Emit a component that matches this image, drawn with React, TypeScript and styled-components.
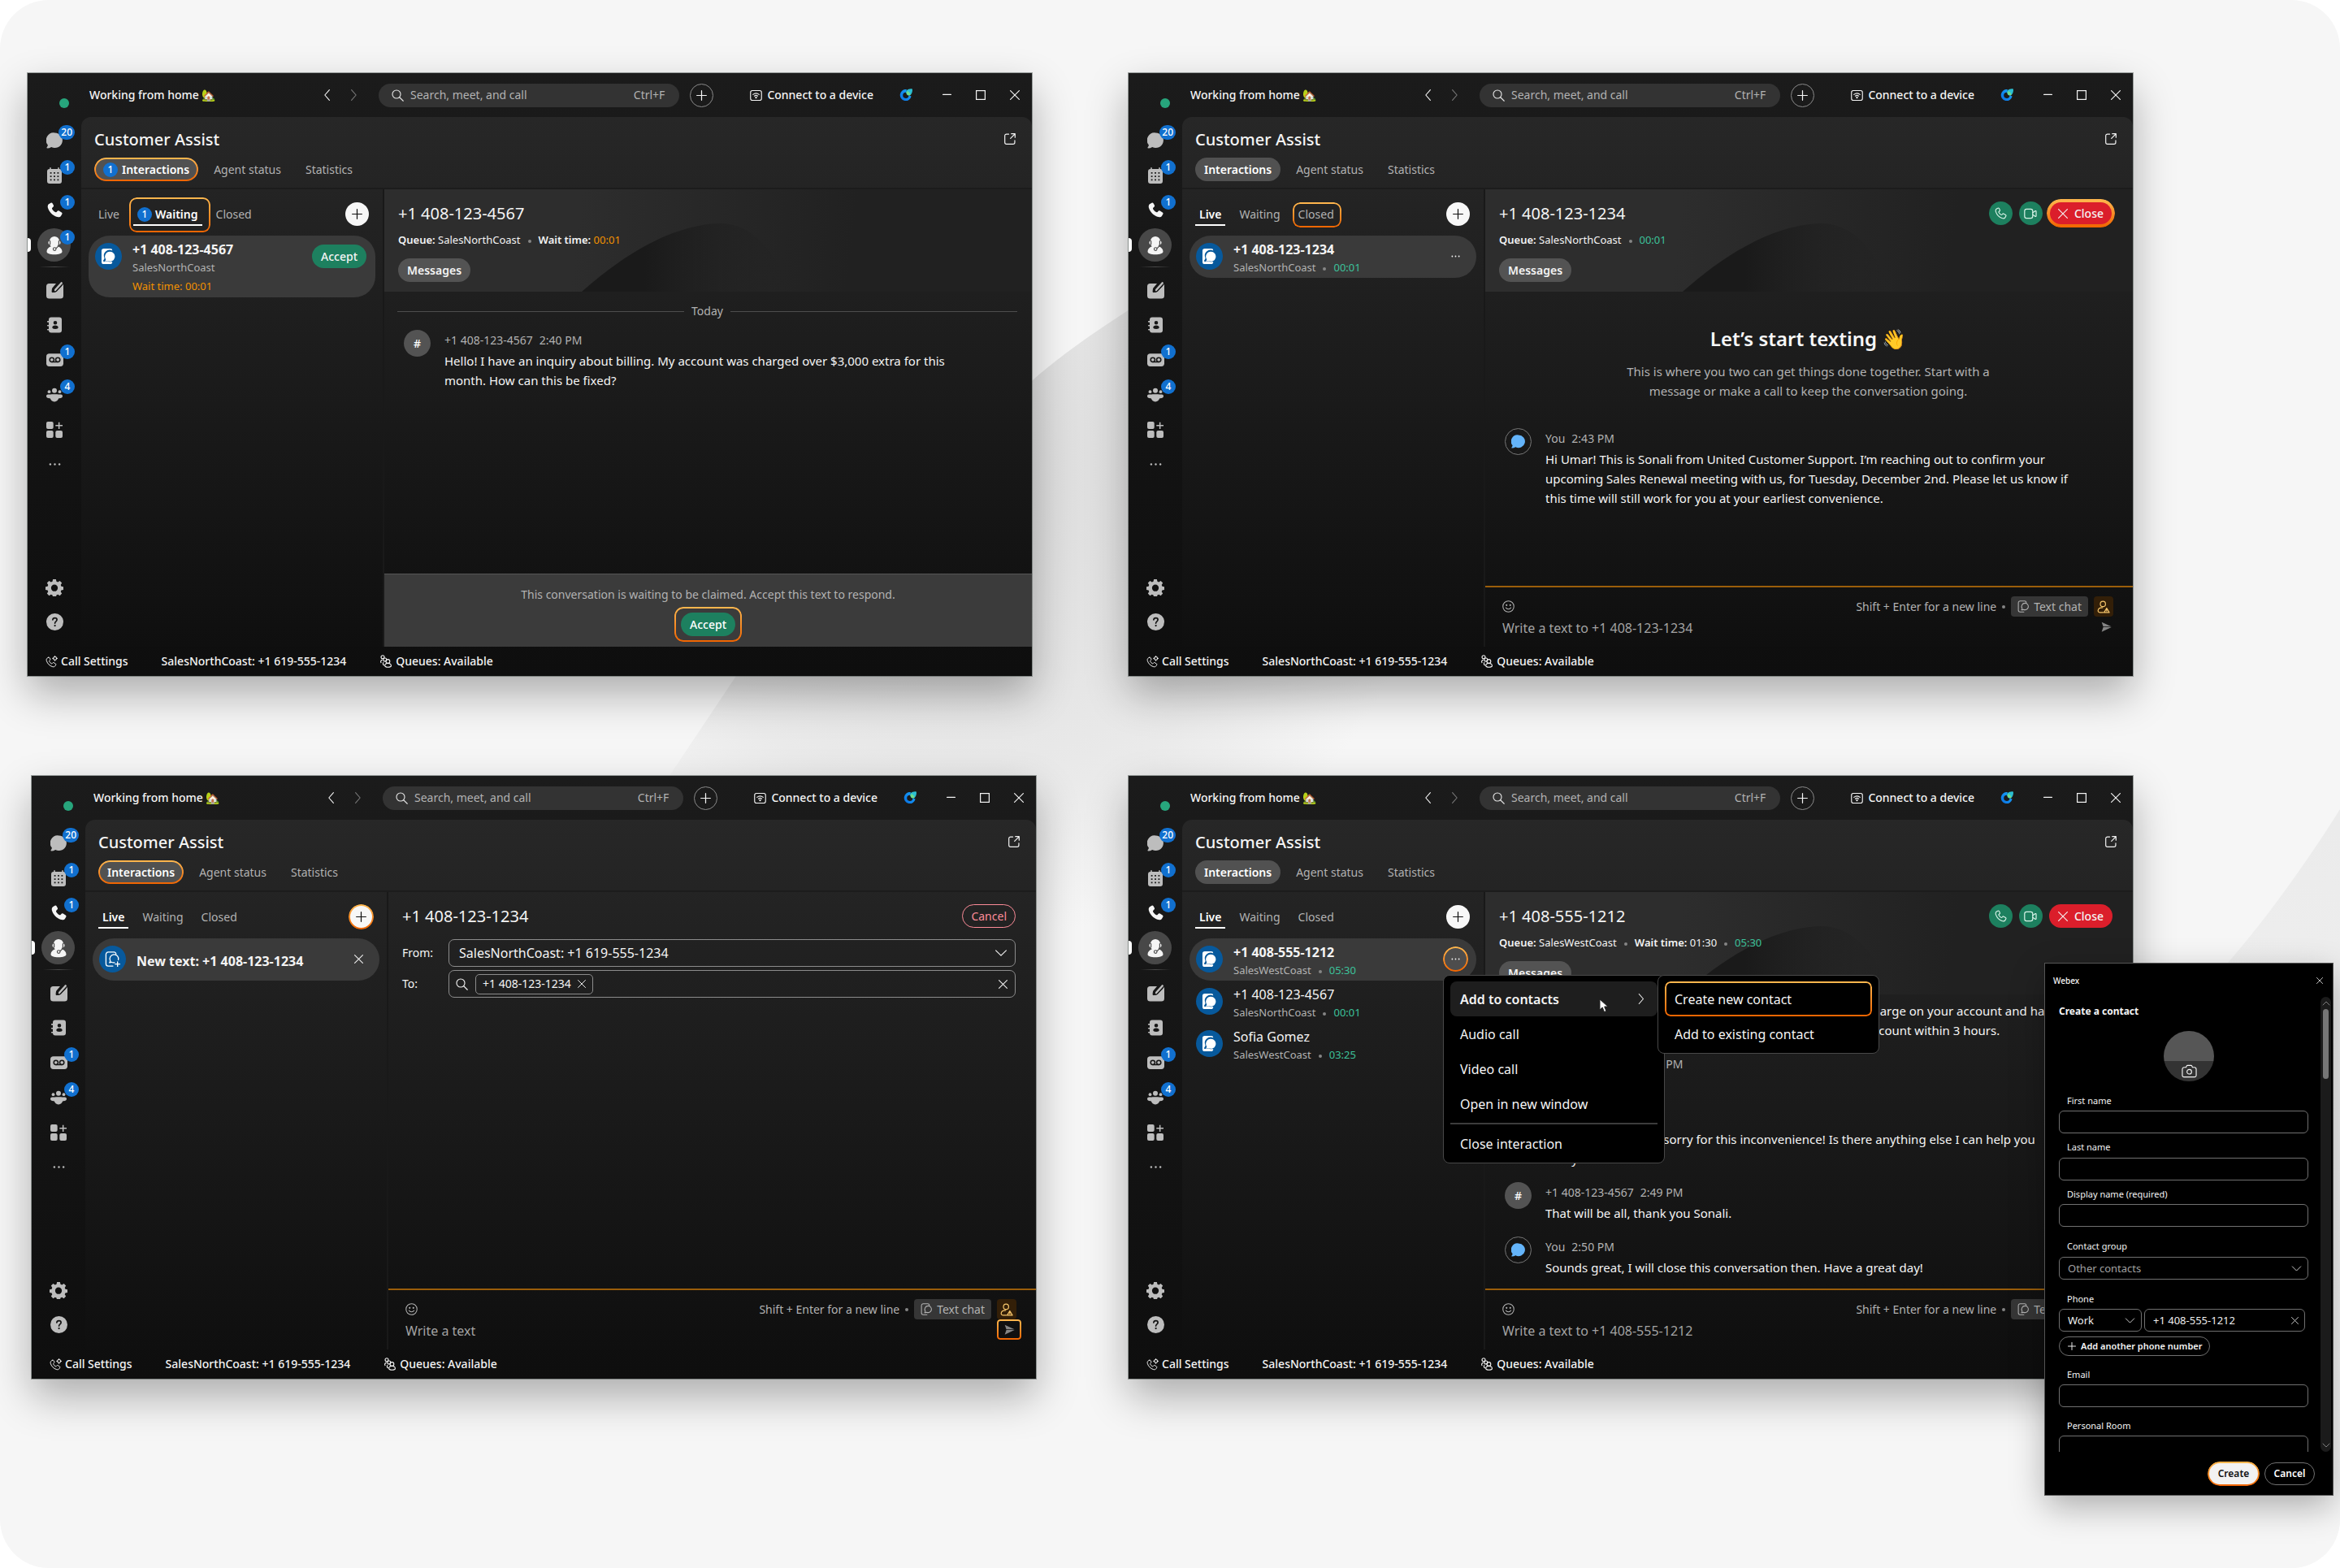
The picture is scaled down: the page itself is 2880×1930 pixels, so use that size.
import React from "react";
import styled, { createGlobalStyle, css } from "styled-components";

const font = `"Noto Sans", "Open Sans", "Noto Color Emoji", sans-serif`;
const green = "#1d805f";
const mint = "#3cc29a";
const amber = "#f29100";
const muted = "#b2b2b2";
const blue = "#1170cf";

const GlobalStyle = createGlobalStyle`
  * { box-sizing: border-box; }
  body { margin: 0; background: #fff; font-family: ${font}; }
  h1, h2, h3, p, ul { margin: 0; padding: 0; font-weight: inherit; }
  ul { list-style: none; }
  button, input, select { font: inherit; color: inherit; margin: 0; padding: 0; border: 0; background: none; outline: none; }
  svg { display: block; flex: none; }
`;

const ring = (inset: string, radius: number, width: number) => css`
  position: relative;
  &::after {
    content: "";
    position: absolute;
    inset: ${inset};
    border-radius: ${radius}px;
    padding: ${width}px;
    background: linear-gradient(#ffb84f, #f06400);
    mask: linear-gradient(#000 0 0) content-box exclude, linear-gradient(#000 0 0) border-box;
    pointer-events: none;
  }
`;

/* ---------- page ---------- */

const Page = styled.main`
  position: relative;
  isolation: isolate;
  min-height: 100vh;
  padding: 90px 255px 60px 0;
  background: #f6f6f6;
  border-radius: 60px;
  overflow: hidden;
  color: #f4f4f4;
  font-size: 14px;
  line-height: 22px;
`;

const Backdrop = styled.svg`
  position: absolute;
  inset: 0;
  width: 100%;
  height: 100%;
  z-index: -1;
`;

const WindowRow = styled.div<{ $start: number }>`
  display: grid;
  grid-template-columns: 1fr 1fr;
  gap: ${(p) => 153 - p.$start}px;
  padding-left: ${(p) => p.$start}px;
  & + & { margin-top: 123px; }
`;

/* ---------- window shell ---------- */

const Frame = styled.section`
  position: relative;
  display: grid;
  grid-template: minmax(706px, auto) 36px / 66px 1fr;
  background: linear-gradient(#1b1b1b, #0e0e0e);
  box-shadow: 0 0 0 1px rgba(70, 80, 75, 0.5), 0 22px 48px rgba(0, 0, 0, 0.3);
`;

const Rail = styled.nav`
  position: relative;
  display: flex;
  flex-direction: column;
  padding-bottom: 9px;
  color: #bdbdbd;
`;

const StatusSlot = styled.div`
  height: 61px;
  padding: 31px 0 0 39px;
  &::before {
    content: "";
    display: block;
    width: 12px;
    height: 12px;
    border-radius: 50%;
    background: #27a57c;
  }
`;

const RailButton = styled.button<{ $active?: boolean; $bright?: boolean }>`
  position: relative;
  display: grid;
  place-items: center;
  height: 43px;
  width: 66px;
  color: ${(p) => (p.$active || p.$bright ? "#f5f5f5" : "#bdbdbd")};
  svg { position: relative; }
  ${(p) =>
    p.$active &&
    css`
      &::before {
        content: "";
        position: absolute;
        left: 12px;
        top: 1px;
        width: 41px;
        height: 41px;
        border-radius: 50%;
        background: #484848;
      }
      &::after {
        content: "";
        position: absolute;
        left: 0;
        top: 13px;
        width: 4px;
        height: 17px;
        border-radius: 0 4px 4px 0;
        background: #fff;
      }
    `}
`;

const Count = styled.span`
  min-width: 18px;
  height: 18px;
  padding: 0 3px;
  border-radius: 9px;
  background: ${blue};
  color: #fff;
  font-size: 12px;
  font-weight: 500;
  line-height: 18px;
  text-align: center;
`;

const RailCount = styled(Count)`
  position: absolute;
  top: 3px;
  right: 8px;
`;

const RailDivider = styled.hr`
  width: 38px;
  height: 1px;
  margin: 5px 0 6px 14px;
  border: 0;
  background: linear-gradient(90deg, transparent, #4a4a4a, transparent);
`;

const RailSpacer = styled.div`
  flex: 1;
`;

const Main = styled.div`
  display: grid;
  grid-template-rows: 54px 1fr;
  min-width: 0;
`;

const TitleBar = styled.header`
  display: flex;
  align-items: center;
  padding: 0 15px 0 10px;
`;

const StatusText = styled.p`
  width: 285px;
  font-weight: 500;
`;

const ChevronPair = styled.div`
  display: flex;
  align-items: center;
  gap: 16px;
  width: 71px;
  button + button { color: #777; }
`;

const SearchBox = styled.label`
  flex: 1;
  display: flex;
  align-items: center;
  gap: 8px;
  height: 29px;
  padding: 0 18px 0 16px;
  border-radius: 15px;
  background: #333;
  color: ${muted};
  input { flex: 1; min-width: 0; }
  input::placeholder { color: ${muted}; opacity: 1; }
  svg { color: #e6e6e6; }
`;

const RoundButton = styled.button<{ $tone: "outline" | "white" | "green" | "grey"; $ring?: boolean }>`
  flex: none;
  display: grid;
  place-items: center;
  width: 29px;
  height: 29px;
  border-radius: 50%;
  ${(p) => p.$tone === "outline" && css`border: 1px solid #8a8a8a; margin-left: 13px;`}
  ${(p) => p.$tone === "white" && css`background: #f7f7f7; color: #111;`}
  ${(p) => p.$tone === "green" && css`background: ${green}; color: #d9f3e8;`}
  ${(p) => p.$tone === "grey" && css`background: #4d4d4d;`}
  ${(p) => p.$ring && ring("-1px", 16, 2)}
`;

const ConnectButton = styled.button`
  display: flex;
  align-items: center;
  gap: 6px;
  margin: 0 32px 0 45px;
  font-weight: 500;
  white-space: nowrap;
`;

const CaptionButtons = styled.div`
  display: flex;
  align-items: center;
  gap: 30px;
  margin-left: 37px;
`;

const Panel = styled.div`
  display: grid;
  grid-template: auto 1fr / 373px 1fr;
  border-radius: 12px 12px 0 0;
  background: linear-gradient(#272727, #0f0f0f);
  overflow: hidden;
`;

const PanelHeader = styled.header`
  grid-column: 1 / -1;
  display: flex;
  justify-content: space-between;
  align-items: flex-start;
  padding: 14px 20px 8px 16px;
  border-bottom: 2px solid #1c1c1c;
  > button { margin-top: 6px; }
`;

const PanelTitle = styled.h1`
  font-size: 20px;
  font-weight: 500;
  line-height: 28px;
`;

const MainTabs = styled.div`
  display: flex;
  gap: 8px;
  margin-top: 8px;
`;

const MainTab = styled.button<{ $on?: boolean; $ring?: boolean }>`
  display: flex;
  align-items: center;
  gap: 5px;
  height: 29px;
  padding: 0 11px;
  border-radius: 15px;
  color: ${(p) => (p.$on ? "#fff" : muted)};
  background: ${(p) => (p.$on ? "#515151" : "transparent")};
  font-weight: ${(p) => (p.$on ? 600 : 400)};
  ${(p) => p.$ring && ring("0", 15, 2)}
`;

/* ---------- interaction list ---------- */

const ListColumn = styled.aside`
  padding: 16px 9px 0 9px;
  border-right: 2px solid #191919;
`;

const ListTabs = styled.div`
  display: flex;
  align-items: flex-start;
  gap: 12px;
  padding: 0 8px 0 7px;
  margin-bottom: 12px;
  > :last-child { margin-left: auto; }
`;

const ListTab = styled.button<{ $on?: boolean; $ring?: string }>`
  display: flex;
  align-items: center;
  gap: 4px;
  height: 29px;
  padding: 3px 5px 0;
  color: ${(p) => (p.$on ? "#fff" : muted)};
  font-weight: ${(p) => (p.$on ? 600 : 400)};
  border-bottom: 2px solid ${(p) => (p.$on ? "#fff" : "transparent")};
  ${(p) => p.$ring && ring(p.$ring, 9, 2)}
`;

const Item = styled.li<{ $on?: boolean }>`
  display: grid;
  grid-template-columns: 33px 1fr auto;
  column-gap: 13px;
  align-items: center;
  min-height: 52px;
  padding: 6px 11px 2px 8px;
  border-radius: 26px;
  background: ${(p) => (p.$on ? "#3a3a3a" : "transparent")};
  > :first-child, > :last-child { align-self: start; }
`;

const QueueAvatar = styled.span`
  display: grid;
  place-items: center;
  width: 33px;
  height: 33px;
  margin-top: 3px;
  border-radius: 50%;
  background: #07599c;
  color: #fff;
`;

const ItemTitle = styled.h3<{ $bold?: boolean }>`
  font-size: 16px;
  font-weight: ${(p) => (p.$bold ? 700 : 400)};
`;

const Meta = styled.p`
  color: ${muted};
  font-size: 13px;
`;

const WaitMeta = styled(Meta)`
  color: ${amber};
  line-height: 24px;
`;

const Dot = styled.i<{ $gap: number }>`
  display: inline-block;
  width: 4px;
  height: 4px;
  margin: 0 ${(p) => p.$gap}px;
  border-radius: 50%;
  background: #858585;
  vertical-align: middle;
`;

const Time = styled.span<{ $tone?: "mint" | "amber" }>`
  color: ${(p) => (p.$tone === "mint" ? mint : p.$tone === "amber" ? amber : "inherit")};
`;

const PillButton = styled.button<{ $tone: "green" | "red" | "pink"; $ring?: [string, number, number] }>`
  display: flex;
  align-items: center;
  justify-content: center;
  gap: 8px;
  height: 29px;
  padding: 0 11px;
  border-radius: 15px;
  font-weight: 500;
  ${(p) => p.$tone === "green" && css`background: ${green};`}
  ${(p) => p.$tone === "red" && css`background: #db1e2b;`}
  ${(p) => p.$tone === "pink" && css`border: 1px solid #fc8b98; color: #fc8b98; font-weight: 400; padding: 0 10px;`}
  ${(p) => p.$ring && ring(...p.$ring)}
`;

const ItemAction = styled.div`
  display: flex;
  align-items: center;
  height: 39px;
`;

const IconButton = styled.button`
  display: grid;
  place-items: center;
  width: 29px;
  height: 29px;
`;

/* ---------- conversation ---------- */

const Conversation = styled.section`
  display: flex;
  flex-direction: column;
  min-width: 0;
`;

const ConvHeader = styled.header<{ $plain?: boolean }>`
  position: relative;
  isolation: isolate;
  padding: 15px 25px 12px 17px;
  background: ${(p) => (p.$plain ? "none" : "linear-gradient(97deg, #2d2d2d 30%, #212121 72%)")};
`;

const HeaderArt = styled.svg`
  position: absolute;
  left: 0;
  bottom: 0;
  z-index: -1;
`;

const ConvTop = styled.div`
  display: flex;
  align-items: center;
  gap: 8px;
  height: 29px;
`;

const ConvTitle = styled.h2`
  flex: 1;
  font-size: 20px;
  line-height: 28px;
`;

const QueueLine = styled.p`
  margin-top: 7px;
  margin-bottom: 12px;
  font-size: 13px;
  b { font-weight: 600; }
`;

const MessagesTab = styled.button`
  height: 29px;
  padding: 0 11px;
  border-radius: 15px;
  background: #535353;
  font-weight: 600;
`;

const Body = styled.div<{ $end?: boolean }>`
  flex: 1 1 0;
  display: flex;
  flex-direction: column;
  justify-content: ${(p) => (p.$end ? "flex-end" : "flex-start")};
  gap: 17px;
  min-height: 0;
  padding: 14px 18px 14px 16px;
  overflow: hidden;
`;

const DayDivider = styled.div`
  display: flex;
  align-items: center;
  gap: 9px;
  color: ${muted};
  line-height: 20px;
  margin-bottom: -4px;
  &::before, &::after { content: ""; flex: 1; height: 1px; background: #4d4d4d; }
`;

const Message = styled.article`
  display: grid;
  grid-template-columns: 33px 1fr;
  column-gap: 17px;
  padding: 0 0 0 8px;
`;

const SenderAvatar = styled.span<{ $self?: boolean }>`
  display: grid;
  place-items: center;
  width: 33px;
  height: 33px;
  border-radius: 50%;
  background: ${(p) => (p.$self ? "none" : "#535353")};
  border: ${(p) => (p.$self ? "1px solid #777" : "0")};
  color: ${(p) => (p.$self ? "#64b4fa" : "#fff")};
  font-weight: 500;
`;

const Sender = styled.p`
  display: flex;
  gap: 8px;
  color: ${muted};
  line-height: 26px;
`;

const MessageText = styled.p`
  font-size: 15px;
  line-height: 24px;
`;

const Intro = styled.div`
  padding: 26px 0 17px;
  text-align: center;
  color: ${muted};
  font-size: 15px;
  line-height: 24px;
  h3 { margin-bottom: 10px; color: #f7f7f7; font-size: 24px; font-weight: 600; line-height: 36px; }
  p { max-width: 500px; margin: 0 auto; }
`;

const ClaimBar = styled.footer`
  display: flex;
  flex-direction: column;
  align-items: center;
  gap: 11px;
  padding: 14px 0 13px;
  border-top: 1px solid #555;
  background: #3b3b3b;
  color: ${muted};
  button { color: #fff; }
`;

const Composer = styled.form`
  padding: 11px 18px 7px 21px;
  border-top: 2px solid #9a5d0a;
  color: ${muted};
`;

const ComposerTools = styled.div`
  display: flex;
  align-items: center;
  height: 25px;
  padding-right: 6px;
  > :first-child { margin-right: auto; width: 15px; }
`;

const ModeChip = styled.button`
  display: flex;
  align-items: center;
  gap: 5px;
  height: 25px;
  padding: 0 8px;
  margin-right: 7px;
  border-radius: 4px;
  background: #363636;
`;

const ContactChip = styled.button`
  display: grid;
  place-items: center;
  width: 24px;
  height: 25px;
  border-radius: 4px;
  background: #331f08;
  color: #f7c66b;
`;

const ComposerEntry = styled.div`
  display: flex;
  align-items: flex-start;
  height: 30px;
  input { flex: 1; height: 28px; font-size: 16px; }
  input::placeholder { color: #a3a3a3; opacity: 1; }
`;

const SendButton = styled.button<{ $ring?: boolean }>`
  display: grid;
  place-items: center;
  width: 30px;
  height: 25px;
  color: #858585;
  ${(p) => p.$ring && ring("0", 4, 2)}
`;

const FieldRow = styled.div<{ $gap: number }>`
  display: grid;
  grid-template-columns: 57px 1fr;
  align-items: center;
  margin-top: ${(p) => p.$gap}px;
`;

const FieldBox = styled.div`
  display: flex;
  align-items: center;
  gap: 9px;
  height: 34px;
  padding: 0 9px 0 8px;
  border: 1px solid #8c8c8c;
  border-radius: 7px;
  font-size: 16px;
  select, input { flex: 1; min-width: 0; padding-left: 4px; appearance: none; }
`;

const NumberChip = styled.span`
  display: flex;
  align-items: center;
  gap: 8px;
  height: 25px;
  padding: 0 8px;
  border: 1px solid #8c8c8c;
  border-radius: 5px;
  font-size: 14px;
`;

const FootBar = styled.footer`
  grid-column: 1 / -1;
  display: flex;
  align-items: center;
  gap: 41px;
  padding-left: 22px;
  font-weight: 500;
  button { display: flex; align-items: center; gap: 4px; }
`;

/* ---------- menus ---------- */

const MenuBox = styled.div<{ $x: number }>`
  position: absolute;
  top: 245px;
  left: ${(p) => p.$x}px;
  width: 273px;
  padding: 7px 8px 2px;
  border: 1px solid #484848;
  border-radius: 8px;
  background: #000;
  font-size: 16px;
  hr { height: 2px; margin: 2px 0; border: 0; background: #3c3c3c; }
`;

const MenuItem = styled.button<{ $on?: boolean; $ring?: boolean }>`
  display: flex;
  align-items: center;
  justify-content: space-between;
  width: 100%;
  height: 43px;
  padding: 0 13px 0 12px;
  border-radius: 8px;
  background: ${(p) => (p.$on ? "#1e1e1e" : "transparent")};
  font-weight: ${(p) => (p.$on ? 600 : 400)};
  ${(p) => p.$ring && ring("0", 7, 2)}
`;

const Pointer = styled.svg`
  position: absolute;
  left: 191px;
  top: 28px;
`;

/* ---------- contact dialog ---------- */

const Dialog = styled.section`
  position: absolute;
  top: 231px;
  left: calc(100% - 108px);
  width: 354px;
  height: 654px;
  display: grid;
  grid-template-rows: 41px 1fr 53px;
  background: #000;
  box-shadow: 0 0 0 1px #555, 0 14px 40px rgba(0, 0, 0, 0.3);
  font-size: 11px;
  line-height: 16px;
`;

const DialogBar = styled.header`
  display: flex;
  align-items: center;
  justify-content: space-between;
  padding: 0 12px 0 10px;
  font-size: 10px;
  font-weight: 500;
`;

const DialogScroll = styled.div`
  display: grid;
  grid-template-columns: 1fr 13px;
  min-height: 0;
  padding-right: 2px;
`;

const ContactForm = styled.form`
  display: flex;
  flex-direction: column;
  padding: 9px 15px 0 17px;
  min-height: 0;
  overflow: hidden;
  h2 { font-size: 12px; font-weight: 700; line-height: 18px; }
`;

const PhotoButton = styled.button`
  flex: none;
  display: grid;
  place-items: end center;
  align-self: center;
  width: 62px;
  height: 62px;
  margin: 15px 0 5px 13px;
  padding-bottom: 3px;
  border-radius: 50%;
  background: linear-gradient(#565656 60%, #333 60%);
`;

const Field = styled.div<{ $gap: number; $label: number }>`
  flex: none;
  margin-top: ${(p) => p.$gap}px;
  > label { display: block; padding-left: 10px; margin-bottom: ${(p) => p.$label}px; }
`;

const FieldInput = styled.div<{ $dim?: boolean }>`
  display: flex;
  align-items: center;
  height: 28px;
  padding: 0 7px 0 10px;
  border: 1px solid #707070;
  border-radius: 6px;
  color: ${(p) => (p.$dim ? "#a0a0a0" : "#eee")};
  font-size: 13px;
  input, select { flex: 1; min-width: 0; width: 100%; appearance: none; }
  svg { color: #ddd; }
`;

const PhoneRow = styled.div`
  display: grid;
  grid-template-columns: 102px 1fr;
  gap: 3px;
  padding-right: 4px;
`;

const AddNumber = styled.button`
  flex: none;
  align-self: flex-start;
  display: flex;
  align-items: center;
  gap: 6px;
  height: 24px;
  margin-top: 6px;
  padding: 0 8px 0 10px;
  border: 1px solid #707070;
  border-radius: 12px;
  font-weight: 600;
`;

const ScrollTrack = styled.div`
  display: flex;
  flex-direction: column;
  align-items: center;
  padding: 3px 0;
  border-radius: 7px;
  background: #1b1b1b;
  color: #aaa;
  &::before {
    content: "";
    order: 1;
    width: 7px;
    height: 86px;
    margin: 2px 0 auto;
    border-radius: 4px;
    background: #767676;
  }
  svg:last-child { order: 2; }
`;

const DialogFoot = styled.footer`
  display: flex;
  justify-content: flex-end;
  gap: 7px;
  padding: 13px 22px 0 0;
`;

const DialogButton = styled.button<{ $primary?: boolean }>`
  width: 62px;
  height: 28px;
  border-radius: 14px;
  font-size: 12px;
  font-weight: 600;
  border: 1px solid ${(p) => (p.$primary ? "#f2f2f2" : "#707070")};
  background: ${(p) => (p.$primary ? "#f2f2f2" : "none")};
  color: ${(p) => (p.$primary ? "#111" : "#fff")};
  ${(p) => p.$primary && ring("-2px", 16, 2)}
`;

/* ---------- icons ---------- */

type IconProps = { size?: number; children: React.ReactNode; fill?: boolean; sw?: number; box?: number };
const Icon = ({ size = 20, children, fill, sw = 1.3, box = 20 }: IconProps) => (
  <svg
    width={size}
    height={size}
    viewBox={`0 0 ${box} ${box}`}
    fill={fill ? "currentColor" : "none"}
    stroke={fill ? "none" : "currentColor"}
    strokeWidth={sw}
    strokeLinecap="round"
    strokeLinejoin="round"
    aria-hidden="true"
  >
    {children}
  </svg>
);

const handset =
  "M5.3 1.6 3.2 2.8C1.5 3.8 1.3 6 2.1 8.2c1.5 4.3 5.3 8.200 9.700 9.700 2.200.8 4.400.6 5.400-1.100l1.200-2.100c.4-.7.2-1.500-.5-1.900l-3-1.900c-.6-.4-1.400-.3-1.900.3l-1 1.100c-.4.4-.9.5-1.400.2-1.600-.9-2.900-2.200-3.800-3.800-.3-.5-.2-1 .2-1.400l1.100-1c.6-.5.7-1.300.3-1.900L7.200 2.100c-.4-.7-1.200-.9-1.900-.5z";
const bubble =
  "M10.500 0.500a9.300 9.300 0 1 1-4.300 17.500c-1.600 1-3.300 1.500-5 1.500-.8 0-1-.8-.5-1.300.8-.9 1.200-1.700 1.200-2.600A9.300 9.300 0 0 1 10.500.5z";

const ChatIcon = ({ size = 20 }: { size?: number }) => (<Icon size={size} fill><path d={bubble} /></Icon>);
const CalendarIcon = () => (
  <Icon fill>
    <path fillRule="evenodd" d="M5 0a.8.8 0 0 1 .8.8V2h8.400V.8a.8.8 0 0 1 1.600 0V2h.2a3 3 0 0 1 3 3v12a3 3 0 0 1-3 3H4a3 3 0 0 1-3-3V5a3 3 0 0 1 3-3h.2V.8A.8.8 0 0 1 5 0zM4.700 6v1.800h1.800V6zm4.400 0v1.800h1.800V6zm4.400 0v1.800h1.800V6zM4.700 10.200V12h1.800v-1.800zm4.400 0V12h1.800v-1.800zm4.400 0V12h1.800v-1.800zM4.700 14.400v1.800h1.800v-1.800zm4.400 0v1.800h1.800v-1.800zm4.400 0v1.800h1.800v-1.800z" />
  </Icon>
);
const PhoneSolid = () => (<Icon fill size={21}><path d={handset} /></Icon>);
const PhoneLine = () => (<Icon size={15} sw={1.5}><path d={handset} /></Icon>);
const AgentIcon = () => (
  <Icon size={24} box={24} fill>
    <path d="M12 1a6 6 0 0 1 6 5.500c1 .3 1.500 1.200 1.500 2.200s-.6 2-1.700 2.200c-.4 1-.9 1.800-1.600 2.400 3 1.200 5.300 3.600 5.300 6.200 0 2.500-3.800 3.800-9.500 3.800s-9.500-1.300-9.500-3.800c0-2.600 2.300-5 5.300-6.200-.7-.6-1.200-1.400-1.600-2.400-1.100-.2-1.700-1.200-1.700-2.200s.5-1.900 1.500-2.200A6 6 0 0 1 12 1z" />
    <path d="M6.600 6.500v4.200M17.400 6.500v4.200M17.200 11c-.6 3-2.600 4.500-4.400 5.200" fill="none" stroke="#484848" strokeWidth="1.200" strokeLinecap="round" />
    <circle cx="12.200" cy="16.600" r="1.800" stroke="#484848" strokeWidth="1.100" />
  </Icon>
);
const NoteIcon = () => (
  <Icon size={22} box={22} fill>
    <path d="M4.500 3H13L8.600 8.200c-.4.5-.6 1.100-.7 1.700l-.3 2.500c-.1 1 .7 1.900 1.700 1.700l2.400-.4c.6-.1 1.200-.4 1.600-.9L19 7.200l3-3.500V18a3.500 3.500 0 0 1-3.500 3.500h-14A3.500 3.500 0 0 1 1 18V6.500A3.500 3.500 0 0 1 4.500 3z" />
    <path d="M18.200 1.200a1.900 1.900 0 0 1 2.900 2.500l-7.700 8.600-3.300 1.100.4-3.600z" stroke="#161616" strokeWidth="1.300" />
  </Icon>
);
const ContactsIcon = () => (
  <Icon fill size={20}>
    <path fillRule="evenodd" d="M6 .5h10a3 3 0 0 1 3 3v13a3 3 0 0 1-3 3H6a3 3 0 0 1-3-3H1.700a.8.800 0 0 1 0-1.600H3v-3.300H1.700a.8.800 0 0 1 0-1.600H3V6.700H1.700a.8.800 0 0 1 0-1.600H3V3.500a3 3 0 0 1 3-3zM11 5a2.300 2.300 0 1 0 0 4.600A2.300 2.300 0 0 0 11 5zm0 5.500c-2.200 0-3.700 1.100-3.700 2.500 0 1.300 1.500 1.900 3.700 1.900s3.700-.6 3.700-1.900c0-1.400-1.500-2.500-3.700-2.500z" />
  </Icon>
);
const VoicemailIcon = () => (
  <Icon size={21} fill>
    <rect x="0" y="3" width="20" height="15" rx="3.500" />
    <g fill="none" stroke="#161616" strokeWidth="1.500"><circle cx="6.500" cy="10.300" r="2.500" /><circle cx="13.500" cy="10.300" r="2.500" /><path d="M6.500 12.800h7" /></g>
  </Icon>
);
const PeopleIcon = () => (
  <Icon size={20} fill>
    <circle cx="10" cy="4.800" r="3" /><circle cx="3.500" cy="6.200" r="1.900" /><circle cx="16.500" cy="6.200" r="1.900" />
    <path d="M2 9.500h3c.5 0 .6.500.5 1-.3 1-.2 2.300.2 3.400-.6.300-1.200.4-1.900.4C1.400 14.300 0 13.300 0 11.600 0 10.300.9 9.500 2 9.500zM15 9.500h3c1.100 0 2 .8 2 2.100 0 1.700-1.400 2.700-3.800 2.700-.7 0-1.300-.1-1.900-.4.4-1.100.5-2.400.2-3.400-.1-.5 0-1 .5-1z" />
    <path d="M6.500 9.300h7c1.300 0 2.200 1 2.200 2.300 0 3.900-2.200 6.800-5.700 6.800s-5.700-2.900-5.700-6.800c0-1.300.9-2.300 2.200-2.300z" />
  </Icon>
);
const AppsIcon = () => (
  <Icon size={20} fill>
    <rect x="0" y="0" width="8.700" height="9" rx="2" /><rect x="0" y="11" width="8.700" height="9" rx="2" /><rect x="11.300" y="11" width="8.700" height="9" rx="2" />
    <path d="M14.900.8h1.500v3.300H20v1.500h-3.600V9h-1.500V5.600h-3.600V4.100h3.600z" />
  </Icon>
);
const Dots = ({ size = 15 }: { size?: number }) => (
  <Icon size={size} fill><circle cx="2.500" cy="10" r="1.600" /><circle cx="10" cy="10" r="1.600" /><circle cx="17.500" cy="10" r="1.600" /></Icon>
);
const GearIcon = () => (
  <Icon size={22} box={24} fill>
    <path fillRule="evenodd" d="M10 1h4l.7 3 1.900.8 2.600-1.600 2.800 2.800-1.600 2.600.8 1.900 3 .7v3.900l-3 .7-.8 1.900 1.600 2.600-2.800 2.800-2.600-1.600-1.900.8-.7 3h-4l-.7-3-1.900-.8-2.600 1.600L2 20.300l1.600-2.600-.8-1.900-3-.7v-3.900l3-.7.8-1.900L2 6l2.800-2.800 2.600 1.600L9.300 4zM12 8.300a4.500 4.500 0 1 0 0 9 4.500 4.500 0 0 0 0-9z" />
  </Icon>
);
const HelpIcon = () => (
  <Icon size={21} fill>
    <circle cx="10" cy="10" r="10" />
    <path d="M7.500 7.600c.1-1.500 1.100-2.300 2.500-2.300s2.500.9 2.500 2.200c0 1.900-2.400 1.900-2.400 4" fill="none" stroke="#121212" strokeWidth="1.600" strokeLinecap="round" /><circle cx="10.100" cy="14.400" r="1.100" fill="#121212" />
  </Icon>
);
const Chevron = ({ d, size = 16 }: { d: "left" | "right" | "down" | "up"; size?: number }) => (
  <Icon size={size} sw={1.400}>
    <path d={{ left: "M13 2 6 10l7 8", right: "M7 2l7 8-7 8", down: "M2 6l8 8 8-8", up: "M2 14l8-8 8 8" }[d]} />
  </Icon>
);
const SearchIcon = () => (<Icon size={15} sw={1.500}><circle cx="8" cy="8" r="6.700" /><path d="M13 13l6 6" /></Icon>);
const PlusIcon = ({ size = 13 }: { size?: number }) => (<Icon size={size} sw={1.900}><path d="M10 1v18M1 10h18" /></Icon>);
const CrossIcon = ({ size = 12 }: { size?: number }) => (<Icon size={size} sw={1.900}><path d="M1 1l18 18M19 1L1 19" /></Icon>);
const CastIcon = () => (
  <Icon size={15} sw={1.500}>
    <rect x="1" y="2" width="18" height="16" rx="3" />
    <path d="M5 8.500c3-2.500 7-2.500 10 0M7.300 11c1.600-1.300 3.800-1.300 5.400 0" /><circle cx="10" cy="13.500" r="0.800" />
  </Icon>
);
const AssistantLogo = () => (
  <svg width="16" height="16" viewBox="0 0 16 16" aria-hidden="true">
    <defs><linearGradient id="swirl" x1="0" y1="1" x2="1" y2="0"><stop offset="0" stopColor="#0a6fe0" /><stop offset="1" stopColor="#19a8ff" /></linearGradient></defs>
    <path d="M9 1.200A7 7 0 1 0 14.600 9.500l-3.200-1.300a3.600 3.600 0 1 1-3.600-3.500z" fill="url(#swirl)" />
    <path d="M8.600 2.400C10.500.4 14.300-.2 15.700.4c.7 1.800 0 5.800-2.200 7.500-1.600 1.100-3.600.6-4.500-.9-.9-1.600-1.200-3.200-.4-4.600z" fill="#2cc0d2" />
    <path d="M9.800 3.200c1.800.4 3.500 2.300 3.800 4.500-1.400 1.100-3.700.8-4.600-1-.5-1.200-.3-2.600.8-3.500z" fill="#6fdc8c" />
  </svg>
);
const MinIcon = () => (<Icon size={11} sw={2}><path d="M1 8h18" /></Icon>);
const MaxIcon = () => (<Icon size={12} sw={2}><rect x="1" y="1" width="18" height="18" strokeLinejoin="miter" /></Icon>);
const PopOutIcon = () => (<Icon size={14} sw={1.700}><path d="M8 1.500H4a3 3 0 0 0-3 3V16a3 3 0 0 0 3 3h11.500a3 3 0 0 0 3-3v-3.500M12.500 1H19v6.500M18.700 1.300 11 9" /></Icon>);
const SmsSolid = () => (
  <Icon size={19} fill>
    <path d="M4 0h8.500A2.500 2.500 0 0 1 15 2.500a7.500 7.500 0 0 0-10.300 9.700c.2 1-.5 2-1.200 2.800-.8 1 0 2 1 1.900h1.800c1.200-.1 2.200-.5 3-.9L11 17H15c0 1.700-.9 3-2.500 3H4a3 3 0 0 1-3-3V3a3 3 0 0 1 3-3z" />
    <path d="M12 4a6.300 6.300 0 1 1-2.900 11.900c-1 .6-2 .8-3 .8-.5 0-.7-.5-.4-.8.600-.7.900-1.300.9-2A6.300 6.300 0 0 1 12 4z" />
  </Icon>
);
const SmsLine = ({ size = 16, plus }: { size?: number; plus?: boolean }) => (
  <Icon size={size} sw={1.400}>
    <path d="M14.500 3.500A2.500 2.500 0 0 0 12 1H4.500A3 3 0 0 0 1.500 4v12a3 3 0 0 0 3 3h6" />
    <path d={plus ? "M12.500 14.500c-1.200.3-2.700.1-3.800-.6-.9.500-1.800.7-2.700.7.800-.8 1.200-1.500 1-2.600A5.600 5.600 0 1 1 17.500 11" : "M12.500 4.500a5.500 5.500 0 1 1-2.600 10.400c-1 .5-2 .7-3.200.7.900-.9 1.200-1.700 1-2.700a5.500 5.500 0 0 1 4.800-8.400z"} />
    {plus && <path d="M16.500 13.500v6M13.500 16.500h6" />}
  </Icon>
);
const VideoIcon = () => (
  <Icon size={16} sw={1.500}><rect x="1" y="3" width="12.500" height="14" rx="3" /><path d="M13.500 8.500l3.800-2.700c.7-.4 1.500 0 1.500.8v6.800c0 .8-.8 1.200-1.500.8l-3.800-2.700" /></Icon>
);
const SmileIcon = () => (
  <Icon size={15} sw={1.400}><circle cx="10" cy="10" r="9" /><path d="M5.800 12c1.800 3 6.600 3 8.400 0" /><circle cx="7" cy="7.800" r=".7" fill="currentColor" /><circle cx="13" cy="7.800" r=".7" fill="currentColor" /></Icon>
);
const PersonAlertIcon = () => (
  <Icon size={16} sw={1.500}><circle cx="9" cy="5.500" r="4" /><path d="M9.500 18.500H4a2.500 2.500 0 0 1-2.500-2.700C1.700 12.500 4.500 11 8.500 11" /><path d="M14.800 11.800l4 6.800h-8zM14.800 14.500v2" /></Icon>
);
const SendIcon = () => (<Icon size={13} fill><path d="M1 1l18.500 8.500H4zM4 10.800h15.500L1 19.500z" /></Icon>);
const CallGearIcon = () => (
  <Icon size={15} sw={1.400}><path d={handset} transform="translate(0 1.500) scale(.92)" /><circle cx="15.500" cy="4.500" r="2.600" /><path d="M15.500.8v1M15.500 7.200v1M11.800 4.500h1M18.200 4.500h1" /></Icon>
);
const QueuesIcon = () => (
  <Icon size={16} sw={1.400}><circle cx="5" cy="3.500" r="2.500" /><circle cx="8.500" cy="7.500" r="2.500" /><circle cx="13" cy="10" r="3" /><path d="M4 8c-2 .6-2.500 2.500-1.500 4M6 12c-1 1.500-.5 3.500 1 4M13 13c-3.500 0-5 2-4.500 4 .3 1.500 1.500 2 4.500 2s4.800-.5 5-2c.3-2-1.500-4-5-4z" /></Icon>
);
const CameraIcon = () => (
  <Icon size={19} sw={1.200}><path d="M3.500 5h2.300l1-2c.2-.4.500-.5.900-.5h4.600c.4 0 .7.100.9.500l1 2h2.300A2.500 2.500 0 0 1 19 7.500v8a2 2 0 0 1-2 2H3a2 2 0 0 1-2-2v-8A2.500 2.500 0 0 1 3.500 5z" /><circle cx="10" cy="10.700" r="3" /></Icon>
);

/* ---------- shared window ---------- */

const RailItem = ({ label, count, active, bright, children }: { label: string; count?: string; active?: boolean; bright?: boolean; children: React.ReactNode }) => (
  <RailButton type="button" aria-label={label} $active={active} $bright={bright}>
    {children}
    {count && <RailCount>{count}</RailCount>}
  </RailButton>
);

type WindowProps = {
  tabCount?: string;
  tabRing?: boolean;
  assistCount?: string;
  list: React.ReactNode;
  children: React.ReactNode;
  overlay?: React.ReactNode;
};

const AppWindow = ({ tabCount, tabRing, assistCount, list, children, overlay }: WindowProps) => (
  <Frame>
    <Rail aria-label="Apps">
      <StatusSlot />
      <RailItem label="Messaging" count="20"><ChatIcon /></RailItem>
      <RailItem label="Calendar" count="1"><CalendarIcon /></RailItem>
      <RailItem label="Calling" count="1" bright><PhoneSolid /></RailItem>
      <RailItem label="Customer Assist" count={assistCount} active><AgentIcon /></RailItem>
      <RailDivider />
      <RailItem label="Whiteboards"><NoteIcon /></RailItem>
      <RailItem label="Contacts"><ContactsIcon /></RailItem>
      <RailItem label="Voicemail" count="1"><VoicemailIcon /></RailItem>
      <RailItem label="Teams" count="4"><PeopleIcon /></RailItem>
      <RailItem label="App hub"><AppsIcon /></RailItem>
      <RailItem label="More"><Dots /></RailItem>
      <RailSpacer />
      <RailItem label="Settings"><GearIcon /></RailItem>
      <RailItem label="Help"><HelpIcon /></RailItem>
    </Rail>
    <Main>
      <TitleBar>
        <StatusText>Working from home 🏡</StatusText>
        <ChevronPair>
          <button type="button" aria-label="Back"><Chevron d="left" /></button>
          <button type="button" aria-label="Forward"><Chevron d="right" /></button>
        </ChevronPair>
        <SearchBox>
          <SearchIcon />
          <input placeholder="Search, meet, and call" aria-label="Search, meet, and call" />
          <span>Ctrl+F</span>
        </SearchBox>
        <RoundButton type="button" $tone="outline" aria-label="New"><PlusIcon /></RoundButton>
        <ConnectButton type="button"><CastIcon />Connect to a device</ConnectButton>
        <AssistantLogo />
        <CaptionButtons>
          <button type="button" aria-label="Minimize"><MinIcon /></button>
          <button type="button" aria-label="Maximize"><MaxIcon /></button>
          <button type="button" aria-label="Close window"><CrossIcon /></button>
        </CaptionButtons>
      </TitleBar>
      <Panel>
        <PanelHeader>
          <div>
            <PanelTitle>Customer Assist</PanelTitle>
            <MainTabs>
              <MainTab type="button" $on $ring={tabRing}>{tabCount && <Count>{tabCount}</Count>}Interactions</MainTab>
              <MainTab type="button">Agent status</MainTab>
              <MainTab type="button">Statistics</MainTab>
            </MainTabs>
          </div>
          <button type="button" aria-label="Open in new window"><PopOutIcon /></button>
        </PanelHeader>
        <ListColumn>{list}</ListColumn>
        <Conversation>{children}</Conversation>
      </Panel>
    </Main>
    <FootBar>
      <button type="button"><CallGearIcon />Call Settings</button>
      <span>SalesNorthCoast: +1 619-555-1234</span>
      <button type="button"><QueuesIcon />Queues: Available</button>
    </FootBar>
    {overlay}
  </Frame>
);

const Filters = ({ on = "Live", ringOn, rings, waiting, addRing }: { on?: string; ringOn?: string; rings?: string; waiting?: string; addRing?: boolean }) => (
  <ListTabs>
    {["Live", "Waiting", "Closed"].map((name) => (
      <ListTab key={name} type="button" $on={name === on} $ring={name === ringOn ? rings : undefined}>
        {name === "Waiting" && waiting && <Count>{waiting}</Count>}
        {name}
      </ListTab>
    ))}
    <RoundButton type="button" $tone="white" $ring={addRing} aria-label="New interaction"><PlusIcon /></RoundButton>
  </ListTabs>
);

const Art = () => (
  <HeaderArt width="500" height="126" viewBox="0 0 500 126" aria-hidden="true">
    <defs>
      <linearGradient id="dome" x1="0" x2="1"><stop offset="0.300" stopColor="#1a1a1a" /><stop offset="1" stopColor="#212121" stopOpacity="0" /></linearGradient>
    </defs>
    <path d="M243 126C290 84 350 45 410 42c40-2 70 30 90 84z" fill="url(#dome)" />
  </HeaderArt>
);

const Header = ({ title, queue, wait, waitTone, live, actions }: { title: string; queue: string; wait?: string; waitTone?: "amber"; live?: string; actions?: React.ReactNode }) => (
  <ConvHeader>
    <Art />
    <ConvTop><ConvTitle>{title}</ConvTitle>{actions}</ConvTop>
    <QueueLine>
      <b>Queue:</b> {queue}
      {wait && <><Dot $gap={9} /><b>Wait time:</b> <Time $tone={waitTone}>{wait}</Time></>}
      {live && <><Dot $gap={9} /><Time $tone="mint">{live}</Time></>}
    </QueueLine>
    <MessagesTab type="button">Messages</MessagesTab>
  </ConvHeader>
);

const CallActions = ({ highlight }: { highlight?: boolean }) => (
  <>
    <RoundButton type="button" $tone="green" aria-label="Audio call"><PhoneLine /></RoundButton>
    <RoundButton type="button" $tone="green" aria-label="Video call"><VideoIcon /></RoundButton>
    <PillButton type="button" $tone="red" $ring={highlight ? ["-3px", 18, 4] : undefined}><CrossIcon />Close</PillButton>
  </>
);

const Post = ({ self, name, time, children }: { self?: boolean; name: string; time: string; children: React.ReactNode }) => (
  <Message>
    <SenderAvatar $self={self}>{self ? <ChatIcon size={17} /> : "#"}</SenderAvatar>
    <div>
      <Sender><span>{name}</span><span>{time}</span></Sender>
      <MessageText>{children}</MessageText>
    </div>
  </Message>
);

const TextEntry = ({ hint, sendRing }: { hint: string; sendRing?: boolean }) => (
  <Composer>
    <ComposerTools>
      <button type="button" aria-label="Emoji"><SmileIcon /></button>
      <span>Shift + Enter for a new line</span>
      <Dot $gap={7} />
      <ModeChip type="button"><SmsLine size={15} />Text chat</ModeChip>
      <ContactChip type="button" aria-label="External contact"><PersonAlertIcon /></ContactChip>
    </ComposerTools>
    <ComposerEntry>
      <input placeholder={hint} aria-label={hint} />
      <SendButton type="button" aria-label="Send" $ring={sendRing}><SendIcon /></SendButton>
    </ComposerEntry>
  </Composer>
);

const LiveItem = ({ on, title, queue, time, action }: { on?: boolean; title: string; queue: string; time: string; action?: React.ReactNode }) => (
  <Item $on={on}>
    <QueueAvatar><SmsSolid /></QueueAvatar>
    <div>
      <ItemTitle $bold={on}>{title}</ItemTitle>
      <Meta>{queue}<Dot $gap={9} /><Time $tone="mint">{time}</Time></Meta>
    </div>
    <ItemAction>{action}</ItemAction>
  </Item>
);

/* ---------- windows ---------- */

const WaitingWindow = () => (
  <AppWindow
    tabCount="1"
    tabRing
    assistCount="1"
    list={
      <>
        <Filters on="Waiting" waiting="1" ringOn="Waiting" rings="-6px -10px -10px -5px" />
        <ul>
          <Item $on>
            <QueueAvatar><SmsSolid /></QueueAvatar>
            <div>
              <ItemTitle $bold>+1 408-123-4567</ItemTitle>
              <Meta>SalesNorthCoast</Meta>
              <WaitMeta>Wait time: 00:01</WaitMeta>
            </div>
            <ItemAction><PillButton type="button" $tone="green">Accept</PillButton></ItemAction>
          </Item>
        </ul>
      </>
    }
  >
    <Header title="+1 408-123-4567" queue="SalesNorthCoast" wait="00:01" waitTone="amber" />
    <Body>
      <DayDivider>Today</DayDivider>
      <Post name="+1 408-123-4567" time="2:40 PM">
        Hello! I have an inquiry about billing. My account was charged over $3,000 extra for this<br />month. How can this be fixed?
      </Post>
    </Body>
    <ClaimBar>
      <p>This conversation is waiting to be claimed. Accept this text to respond.</p>
      <PillButton type="button" $tone="green" $ring={["-7px -8px", 11, 2]}>Accept</PillButton>
    </ClaimBar>
  </AppWindow>
);

const LiveWindow = () => (
  <AppWindow
    list={
      <>
        <Filters ringOn="Closed" rings="0 -4px -4px -2px" />
        <ul><LiveItem on title="+1 408-123-1234" queue="SalesNorthCoast" time="00:01" action={<IconButton type="button" aria-label="More options"><Dots size={11} /></IconButton>} /></ul>
      </>
    }
  >
    <Header title="+1 408-123-1234" queue="SalesNorthCoast" live="00:01" actions={<CallActions highlight />} />
    <Body>
      <Intro>
        <h3>Let’s start texting 👋</h3>
        <p>This is where you two can get things done together. Start with a<br />message or make a call to keep the conversation going.</p>
      </Intro>
      <Post self name="You" time="2:43 PM">
        Hi Umar! This is Sonali from United Customer Support. I’m reaching out to confirm your<br />
        upcoming Sales Renewal meeting with us, for Tuesday, December 2nd. Please let us know if<br />
        this time will still work for you at your earliest convenience.
      </Post>
    </Body>
    <TextEntry hint="Write a text to +1 408-123-1234" />
  </AppWindow>
);

const NewTextWindow = () => (
  <AppWindow
    tabRing
    list={
      <>
        <Filters addRing />
        <ul>
          <Item $on>
            <QueueAvatar><SmsLine size={19} plus /></QueueAvatar>
            <ItemTitle $bold>New text: +1 408-123-1234</ItemTitle>
            <ItemAction><IconButton type="button" aria-label="Discard"><CrossIcon size={11} /></IconButton></ItemAction>
          </Item>
        </ul>
      </>
    }
  >
    <ConvHeader $plain>
      <ConvTop>
        <ConvTitle>+1 408-123-1234</ConvTitle>
        <PillButton type="button" $tone="pink">Cancel</PillButton>
      </ConvTop>
      <FieldRow $gap={14}>
        <label htmlFor="from">From:</label>
        <FieldBox>
          <select id="from"><option>SalesNorthCoast: +1 619-555-1234</option></select>
          <Chevron d="down" size={16} />
        </FieldBox>
      </FieldRow>
      <FieldRow $gap={4}>
        <label htmlFor="to">To:</label>
        <FieldBox>
          <SearchIcon />
          <NumberChip>+1 408-123-1234<button type="button" aria-label="Remove number"><CrossIcon size={10} /></button></NumberChip>
          <input id="to" />
          <button type="button" aria-label="Clear"><CrossIcon size={11} /></button>
        </FieldBox>
      </FieldRow>
    </ConvHeader>
    <Body />
    <TextEntry hint="Write a text" sendRing />
  </AppWindow>
);

const ContactMenus = () => (
  <>
    <MenuBox $x={387} role="menu">
      <MenuItem type="button" $on>Add to contacts<Chevron d="right" size={15} /></MenuItem>
      <MenuItem type="button">Audio call</MenuItem>
      <MenuItem type="button">Video call</MenuItem>
      <MenuItem type="button">Open in new window</MenuItem>
      <hr />
      <MenuItem type="button">Close interaction</MenuItem>
      <Pointer width="13" height="18" viewBox="0 0 13 18" aria-hidden="true"><path d="M1 1v13l3.200-3 2.300 5.500 2.400-1L6.700 10H11z" fill="#fff" stroke="#222" /></Pointer>
    </MenuBox>
    <MenuBox $x={651} role="menu">
      <MenuItem type="button" $ring>Create new contact</MenuItem>
      <MenuItem type="button">Add to existing contact</MenuItem>
    </MenuBox>
  </>
);

const ContactDialog = () => (
  <Dialog role="dialog" aria-label="Create a contact">
    <DialogBar>Webex<button type="button" aria-label="Close dialog"><CrossIcon size={8} /></button></DialogBar>
    <DialogScroll>
      <ContactForm>
        <h2>Create a contact</h2>
        <PhotoButton type="button" aria-label="Add photo"><CameraIcon /></PhotoButton>
        <Field $gap={11} $label={4}><label htmlFor="first">First name</label><FieldInput><input id="first" /></FieldInput></Field>
        <Field $gap={9} $label={5}><label htmlFor="last">Last name</label><FieldInput><input id="last" /></FieldInput></Field>
        <Field $gap={9} $label={4}><label htmlFor="display">Display name (required)</label><FieldInput><input id="display" /></FieldInput></Field>
        <Field $gap={16} $label={5}>
          <label htmlFor="group">Contact group</label>
          <FieldInput $dim><select id="group"><option>Other contacts</option></select><Chevron d="down" size={13} /></FieldInput>
        </Field>
        <Field $gap={16} $label={4}>
          <label htmlFor="number">Phone</label>
          <PhoneRow>
            <FieldInput><select aria-label="Phone type"><option>Work</option></select><Chevron d="down" size={13} /></FieldInput>
            <FieldInput><input id="number" defaultValue="+1 408-555-1212" /><button type="button" aria-label="Clear number"><CrossIcon size={9} /></button></FieldInput>
          </PhoneRow>
        </Field>
        <AddNumber type="button"><PlusIcon size={10} />Add another phone number</AddNumber>
        <Field $gap={15} $label={4}><label htmlFor="email">Email</label><FieldInput><input id="email" /></FieldInput></Field>
        <Field $gap={15} $label={4}><label htmlFor="room">Personal Room</label><FieldInput><input id="room" /></FieldInput></Field>
      </ContactForm>
      <ScrollTrack><Chevron d="up" size={10} /><Chevron d="down" size={10} /></ScrollTrack>
    </DialogScroll>
    <DialogFoot>
      <DialogButton type="button" $primary>Create</DialogButton>
      <DialogButton type="button">Cancel</DialogButton>
    </DialogFoot>
  </Dialog>
);

const ContactWindow = () => (
  <AppWindow
    list={
      <>
        <Filters />
        <ul>
          <LiveItem on title="+1 408-555-1212" queue="SalesWestCoast" time="05:30" action={<RoundButton type="button" $tone="grey" $ring aria-label="More options"><Dots size={11} /></RoundButton>} />
          <LiveItem title="+1 408-123-4567" queue="SalesNorthCoast" time="00:01" />
          <LiveItem title="Sofia Gomez" queue="SalesWestCoast" time="03:25" />
        </ul>
      </>
    }
    overlay={<><ContactMenus /><ContactDialog /></>}
  >
    <Header title="+1 408-555-1212" queue="SalesWestCoast" wait="01:30" live="05:30" actions={<CallActions />} />
    <Body $end>
      <Post self name="You" time="2:46 PM">
        I’ve looked through this and I have found the additional charge on your account and have<br />requested the refund. It will be returned quickly to your account within 3 hours.
      </Post>
      <Post name="+1 408-123-4567" time="2:47 PM">Thank you.</Post>
      <Post self name="You" time="2:48 PM">
        Of course! I am very sorry for this inconvenience! Is there anything else I can help you<br />today?
      </Post>
      <Post name="+1 408-123-4567" time="2:49 PM">That will be all, thank you Sonali.</Post>
      <Post self name="You" time="2:50 PM">Sounds great, I will close this conversation then. Have a great day!</Post>
    </Body>
    <TextEntry hint="Write a text to +1 408-555-1212" />
  </AppWindow>
);

export default function App() {
  return (
    <>
      <GlobalStyle />
      <Page>
        <Backdrop viewBox="0 0 2880 1930" preserveAspectRatio="none" aria-hidden="true">
          <defs>
            <radialGradient id="sweep" gradientUnits="userSpaceOnUse" cx="1190" cy="580" r="580">
              <stop offset="0" stopColor="#dadada" /><stop offset="0.700" stopColor="#eaeaea" /><stop offset="1" stopColor="#f6f6f6" />
            </radialGradient>
            <linearGradient id="corner" gradientUnits="userSpaceOnUse" x1="2800" y1="1000" x2="2600" y2="1750">
              <stop offset="0" stopColor="#ebebeb" /><stop offset="1" stopColor="#f6f6f6" />
            </linearGradient>
          </defs>
          <path d="M1560 280C1400 370 1320 425 1271 468 1130 580 990 710 906 832L620 1260H1900V280z" fill="url(#sweep)" />
          <path d="M2880 996C2840 1060 2790 1130 2742 1185L2200 1930H2880z" fill="url(#corner)" />
        </Backdrop>
        <WindowRow $start={34}>
          <WaitingWindow />
          <LiveWindow />
        </WindowRow>
        <WindowRow $start={39}>
          <NewTextWindow />
          <ContactWindow />
        </WindowRow>
      </Page>
    </>
  );
}
